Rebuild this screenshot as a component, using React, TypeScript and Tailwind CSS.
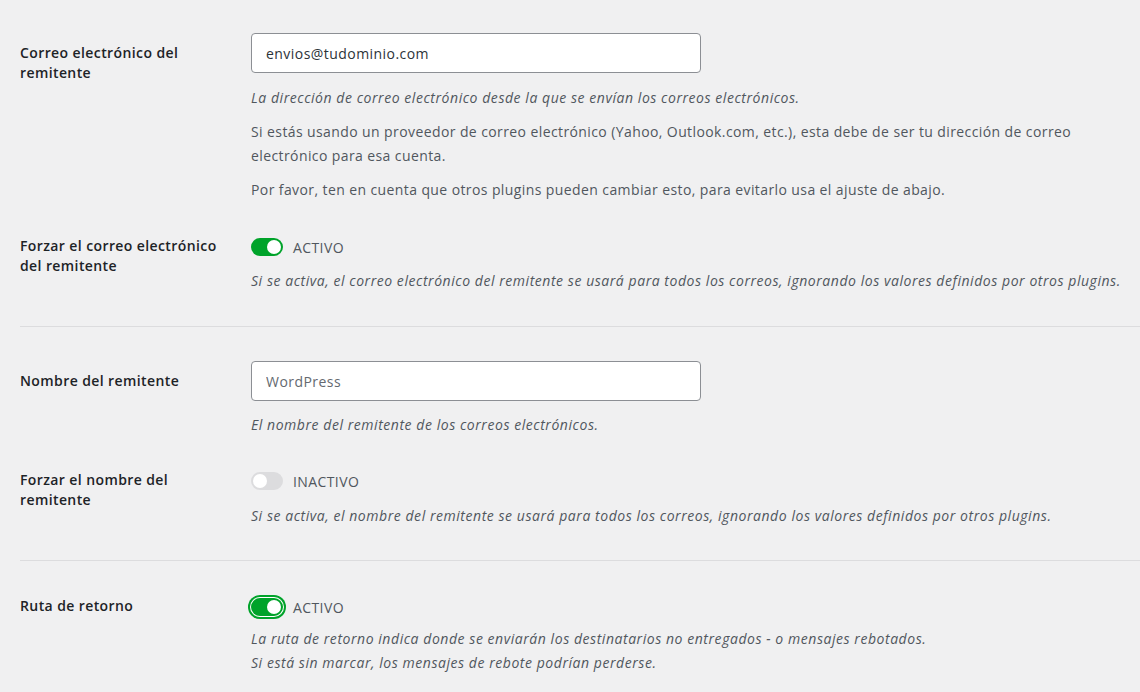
import React from 'react';

type ToggleProps = {
  checked: boolean;
  focused?: boolean;
};

const font = { fontFamily: '"Open Sans", "Noto Sans", sans-serif' };

function Toggle({ checked, focused = false }: ToggleProps) {
  return (
    <div className="flex h-6 items-center gap-[10px]">
      <span
        className={`relative inline-flex h-[18px] w-8 shrink-0 items-center rounded-full ${
          checked ? 'bg-[#00a32a]' : 'bg-[#dcdcde]'
        } ${focused ? 'ring-2 ring-[#00a32a] ring-offset-1 ring-offset-white' : ''}`}
      >
        <span
          className={`absolute top-[2px] h-[14px] w-[14px] rounded-full bg-white ${
            checked ? 'left-[16px]' : 'left-[2px]'
          }`}
        />
      </span>
      <span className="text-[14px] tracking-[0.4px] text-[#50575e]">
        {checked ? 'ACTIVO' : 'INACTIVO'}
      </span>
    </div>
  );
}

function Row({
  label,
  labelTop,
  children,
}: {
  label: React.ReactNode;
  labelTop: string;
  children: React.ReactNode;
}) {
  return (
    <div className="grid grid-cols-[231px_1fr]">
      <div
        className={`w-[210px] text-[14px] font-semibold leading-5 tracking-[0.4px] text-[#1d2327] ${labelTop}`}
      >
        {label}
      </div>
      <div className="pr-[10px]">{children}</div>
    </div>
  );
}

function Description({ children, className = '' }: { children: React.ReactNode; className?: string }) {
  return (
    <p
      className={`text-[14px] italic leading-6 tracking-[0.55px] text-[#50575e] ${className}`}
    >
      {children}
    </p>
  );
}

function TextInput({ value, muted = false }: { value: string; muted?: boolean }) {
  return (
    <input
      readOnly
      value={value}
      className={`block h-10 w-[450px] rounded border border-[#8c8f94] bg-white px-[14px] text-[14px] tracking-[0.45px] outline-none ${
        muted ? 'text-[#646970]' : 'text-[#2c3338]'
      }`}
      style={font}
    />
  );
}

export default function App() {
  return (
    <div className="min-h-screen bg-[#f0f0f1] pl-5" style={font}>
      <section className="flex flex-col gap-[33px] border-b border-[#dcdcde] pb-[33px] pt-[33px]">
        <Row
          labelTop="pt-[10px]"
          label={
            <>
              Correo electrónico del
              <br />
              remitente
            </>
          }
        >
          <TextInput value="envios@tudominio.com" />
          <Description className="mt-[13px]">
            La dirección de correo electrónico desde la que se envían los correos
            electrónicos.
          </Description>
          <p className="mt-[10px] text-[14px] leading-6 tracking-[0.4px] text-[#50575e]">
            Si estás usando un proveedor de correo electrónico (Yahoo, Outlook.com,
            etc.), esta debe de ser tu dirección de correo
            <br />
            electrónico para esa cuenta.
          </p>
          <p className="mt-[10px] text-[14px] leading-6 tracking-[0.4px] text-[#50575e]">
            Por favor, ten en cuenta que otros plugins pueden cambiar esto, para
            evitarlo usa el ajuste de abajo.
          </p>
        </Row>
        <Row
          labelTop="pt-[1px]"
          label={
            <>
              Forzar el correo electrónico
              <br />
              del remitente
            </>
          }
        >
          <Toggle checked />
          <Description className="mt-[10px]">
            Si se activa, el correo electrónico del remitente se usará para todos los
            correos, ignorando los valores definidos por otros plugins.
          </Description>
        </Row>
      </section>

      <section className="flex flex-col gap-[32px] border-b border-[#dcdcde] pb-[32px] pt-[34px]">
        <Row labelTop="pt-[10px]" label="Nombre del remitente">
          <TextInput value="WordPress" muted />
          <Description className="mt-[12px]">
            El nombre del remitente de los correos electrónicos.
          </Description>
        </Row>
        <Row
          labelTop="pt-[1px]"
          label={
            <>
              Forzar el nombre del
              <br />
              remitente
            </>
          }
        >
          <Toggle checked={false} />
          <Description className="mt-[11px]">
            Si se activa, el nombre del remitente se usará para todos los correos,
            ignorando los valores definidos por otros plugins.
          </Description>
        </Row>
      </section>

      <section className="pb-8 pt-[34px]">
        <Row labelTop="pt-[1px]" label="Ruta de retorno">
          <Toggle checked focused />
          <Description className="mt-[8px]">
            La ruta de retorno indica donde se enviarán los destinatarios no entregados
            - o mensajes rebotados.
            <br />
            Si está sin marcar, los mensajes de rebote podrían perderse.
          </Description>
        </Row>
      </section>
    </div>
  );
}
